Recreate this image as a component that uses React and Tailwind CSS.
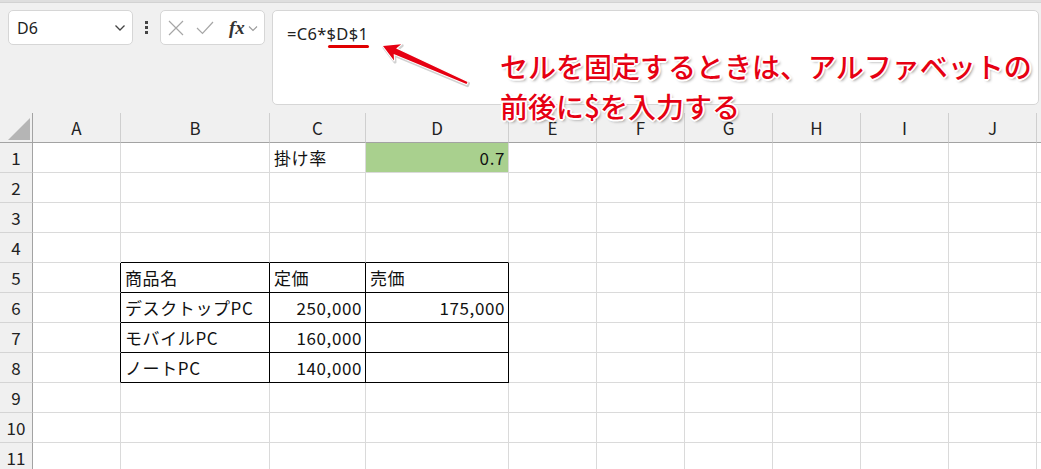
import React from "react";

const COLS = ["", "A", "B", "C", "D", "E", "F", "G", "H", "I", "J", ""];

const DATA = {
  "1-C": { t: "掛け率" },
  "1-D": { t: "0.7", r: true },
  "5-B": { t: "商品名" },
  "5-C": { t: "定価" },
  "5-D": { t: "売価" },
  "6-B": { t: "デスクトップPC" },
  "6-C": { t: "250,000", r: true },
  "6-D": { t: "175,000", r: true },
  "7-B": { t: "モバイルPC" },
  "7-C": { t: "160,000", r: true },
  "8-B": { t: "ノートPC" },
  "8-C": { t: "140,000", r: true },
};

function inTable(r, c) {
  return r >= 5 && r <= 8 && (c === "B" || c === "C" || c === "D");
}

function cellBorder(r, c) {
  const right =
    inTable(r, c) || (r >= 5 && r <= 8 && c === "A")
      ? "border-r-black"
      : "border-r-[#dadada]";
  const bottom =
    inTable(r, c) || (r === 4 && (c === "B" || c === "C" || c === "D"))
      ? "border-b-black"
      : "border-b-[#dadada]";
  return right + " " + bottom;
}

function Cell({ r, c }) {
  const d = DATA[r + "-" + c];
  const green = r === 1 && c === "D";
  return (
    <div
      className={
        "border-r border-b flex items-center px-[4px] text-[17px] tracking-[0.6px] text-[#111] whitespace-nowrap overflow-visible " +
        cellBorder(r, c) +
        (green ? " bg-[#a9d08e]" : " bg-white") +
        (d && d.r ? " justify-end pr-[3px]" : " justify-start")
      }
    >
      {d ? d.t : null}
    </div>
  );
}

export default function App() {
  const rows = [1, 2, 3, 4, 5, 6, 7, 8, 9, 10, 11];
  const letters = COLS.slice(1);
  return (
    <div
      className="relative w-[1041px] h-[469px] overflow-hidden bg-[#f0f0f0]"
      style={{ fontFamily: '"Noto Sans CJK JP", "Noto Sans", sans-serif' }}
    >
      {/* top strip */}
      <div className="h-[3px] bg-[#dedede] border-b border-[#d2d2d2]" />

      {/* toolbar */}
      <div className="h-[110px] flex items-start pt-[7px]">
        <div className="ml-[8px] w-[125px] h-[35px] bg-white border border-[#d6d6d6] rounded-[5px] flex items-center justify-between pl-[8px] pr-[6px]">
          <span
            className="text-[16px] text-[#222]"
            style={{ fontFamily: '"Noto Sans", sans-serif' }}
          >
            D6
          </span>
          <svg width="12" height="8" viewBox="0 0 12 8">
            <path d="M1.5 1.5 L6 6 L10.5 1.5" fill="none" stroke="#444" strokeWidth="1.3" />
          </svg>
        </div>
        <div className="w-[27px] h-[35px] flex flex-col items-center justify-center gap-[2px]">
          <div className="w-[3px] h-[3px] bg-[#444]" />
          <div className="w-[3px] h-[3px] bg-[#444]" />
          <div className="w-[3px] h-[3px] bg-[#444]" />
        </div>
        <div className="w-[105px] h-[35px] bg-white border border-[#d6d6d6] rounded-[5px] flex items-center pl-[7px]">
          <svg width="16" height="16" viewBox="0 0 16 16">
            <path d="M1 1 L15 15 M15 1 L1 15" stroke="#a6a6a6" strokeWidth="1.2" />
          </svg>
          <svg width="18" height="16" viewBox="0 0 18 16" className="ml-[12px]">
            <path d="M1 8 L6.5 13.5 L17 2" fill="none" stroke="#a6a6a6" strokeWidth="1.2" />
          </svg>
          <span
            className="ml-[15px] text-[19px] italic font-bold text-[#333] leading-none"
            style={{ fontFamily: '"Liberation Serif", "DejaVu Serif", serif' }}
          >
            fx
          </span>
          <svg width="10" height="7" viewBox="0 0 10 7" className="ml-[3px] mt-[2px]">
            <path d="M1 1.5 L5 5.5 L9 1.5" fill="none" stroke="#999" strokeWidth="1.1" />
          </svg>
        </div>
        <div className="ml-[7px] w-[767px] h-[95px] bg-white border border-[#d6d6d6] rounded-[5px] pl-[14px] pt-[10px]">
          <span
            className="text-[16.5px] text-[#222] tracking-[0.3px]"
            style={{ fontFamily: '"Noto Sans", sans-serif' }}
          >
            =C6*
            <span className="relative">
              $D$1
              <span className="absolute left-[1px] right-[-1px] top-[23px] h-[3px] rounded-full bg-[#e00000]" />
            </span>
          </span>
        </div>
      </div>

      {/* grid */}
      <div className="grid grid-cols-[33px_88px_149px_96px_143px_88px_88px_88px_88px_88px_88px_1fr] grid-rows-[30px_repeat(11,30px)]">
        {/* corner */}
        <div className="bg-[#f0f0f0] border-r border-b border-r-[#a3a3a3] border-b-[#a3a3a3] relative">
          <svg width="33" height="30" viewBox="0 0 33 30" className="absolute left-0 top-0">
            <polygon points="8,27 30,5 30,27" fill="#b5b5b5" />
          </svg>
        </div>
        {letters.map((l, i) => (
          <div
            key={"h" + i}
            className="bg-[#f0f0f0] border-r border-b border-r-[#cfcfcf] border-b-[#a3a3a3] flex items-center justify-center text-[17px] text-[#222]"
          >
            {l}
          </div>
        ))}
        {rows.map((r) => (
          <React.Fragment key={"r" + r}>
            <div className="bg-[#f0f0f0] border-r border-b border-r-[#a3a3a3] border-b-[#d4d4d4] flex items-center justify-center text-[17px] text-[#222]">
              {r}
            </div>
            {letters.map((c, i) => (
              <Cell key={r + "-" + i} r={r} c={c || "K"} />
            ))}
          </React.Fragment>
        ))}
      </div>

      {/* arrow */}
      <svg
        width="1041"
        height="469"
        viewBox="0 0 1041 469"
        className="absolute left-0 top-0 pointer-events-none"
      >
        <polygon
          points="384,47.5 402.2,45.7 397.1,49.9 468.5,83.4 467.5,85.6 394.7,55.4 395,62.1"
          fill="#9a9a9a"
          opacity="0.45"
          stroke="#9a9a9a"
          strokeWidth="3"
          strokeLinejoin="round"
        />
        <polygon
          points="383,46 401.2,44.2 396.1,48.45 467.5,81.9 466.5,84.1 393.7,53.95 394,60.6"
          fill="#e60012"
          stroke="#ffffff"
          strokeWidth="2"
          strokeLinejoin="round"
          paintOrder="stroke"
        />
      </svg>

      {/* annotation */}
      <div
        className="absolute left-[500px] top-[46px] text-[28px] leading-[40px] text-[#e60012] font-medium whitespace-nowrap [text-shadow:1px_1px_0_#fff,-1px_-1px_0_#fff,1px_-1px_0_#fff,-1px_1px_0_#fff,2px_0_0_#fff,-2px_0_0_#fff,0_2px_0_#fff,0_-2px_0_#fff,2px_2px_3px_rgba(0,0,0,0.45)]"
      >
        <div>セルを固定するときは、アルファベットの</div>
        <div>前後に$を入力する</div>
      </div>
    </div>
  );
}
